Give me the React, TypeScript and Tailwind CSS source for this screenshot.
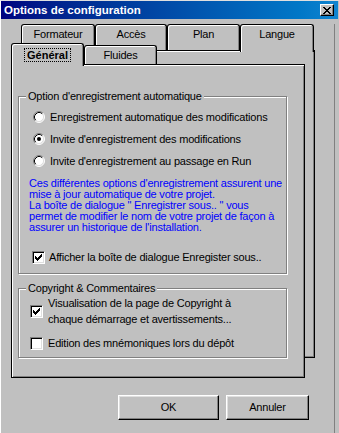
import React from "react";

const CHECK: [number, number][] = [
  [6, 0],
  [5, 1], [6, 1],
  [0, 2], [4, 2], [5, 2], [6, 2],
  [0, 3], [1, 3], [3, 3], [4, 3], [5, 3],
  [0, 4], [1, 4], [2, 4], [3, 4], [4, 4],
  [1, 5], [2, 5], [3, 5],
  [2, 6],
];

const CLOSE_X: [number, number][] = [];
[
  "XX....XX",
  ".XX..XX.",
  "..XXXX..",
  "...XX...",
  "..XXXX..",
  ".XX..XX.",
  "XX....XX",
].forEach((row, y) =>
  row.split("").forEach((c, x) => {
    if (c === "X") CLOSE_X.push([x, y]);
  })
);

function Radio({ checked }: { checked?: boolean }) {
  return (
    <svg width="12" height="12" viewBox="0 0 12 12" className="shrink-0">
      <circle cx="6" cy="6" r="5" fill="#fff" />
      <path d="M2.11 9.89 A5.5 5.5 0 0 1 9.89 2.11" stroke="#808080" fill="none" />
      <path d="M9.89 2.11 A5.5 5.5 0 0 1 2.11 9.89" stroke="#fff" fill="none" />
      <path d="M2.82 9.18 A4.5 4.5 0 0 1 9.18 2.82" stroke="#000" fill="none" />
      <path d="M9.18 2.82 A4.5 4.5 0 0 1 2.82 9.18" stroke="#dfdfdf" fill="none" />
      {checked && <circle cx="6" cy="6" r="2" fill="#000" />}
    </svg>
  );
}

function Checkbox({ checked }: { checked?: boolean }) {
  return (
    <div className="w-[13px] h-[13px] shrink-0 bg-white border border-t-[#808080] border-l-[#808080] border-b-white border-r-white shadow-[inset_1px_1px_0_#000,inset_-1px_-1px_0_#dfdfdf]">
      {checked && (
        <svg width="7" height="7" viewBox="0 0 7 7" className="ml-[2px] mt-[2px]" shapeRendering="crispEdges">
          {CHECK.map(([x, y]) => (
            <rect key={`${x}-${y}`} x={x} y={y} width="1" height="1" fill="#000" />
          ))}
        </svg>
      )}
    </div>
  );
}

function BackTab({ label, w }: { label: string; w: string }) {
  return (
    <div
      className={`${w} h-[26px] border border-b-0 border-black rounded-t-[3px] shadow-[inset_1px_1px_0_#fff,inset_-1px_0_0_#808080] bg-[#c0c0c0] text-center pt-[3px]`}
    >
      {label}
    </div>
  );
}

export default function App() {
  return (
    <div className="w-[339px] h-[433px] overflow-hidden bg-[#c0c0c0] font-[family-name:'Liberation_Sans',Arial,sans-serif] text-[11px] leading-[13px] text-black border-l border-t border-l-white border-t-[#dfdfdf]">
      {/* Title bar */}
      <div className="h-[18px] w-[337px] flex items-center justify-between pl-[3px] pr-[4px] bg-gradient-to-r from-[#000080] to-[#1084d0]">
        <span className="text-white font-bold text-[11.5px] whitespace-nowrap">Options de configuration</span>
        <div className="w-[14px] h-[12px] flex items-center justify-center bg-[#c0c0c0] border border-t-white border-l-white border-r-black border-b-black shadow-[inset_-1px_-1px_0_#808080]">
          <svg width="8" height="7" viewBox="0 0 8 7" shapeRendering="crispEdges">
            {CLOSE_X.map(([x, y]) => (
              <rect key={`${x}-${y}`} x={x} y={y} width="1" height="1" fill="#000" />
            ))}
          </svg>
        </div>
      </div>

      {/* Body */}
      <div className="w-[334px] h-[412px] border-r border-b border-[#808080] tracking-[-0.2px]">
        {/* Back tab row */}
        <div className="mt-[5px] ml-[20px] flex items-start">
          <BackTab label="Formateur" w="w-[74px]" />
          <BackTab label="Accès" w="w-[72px]" />
          <BackTab label="Plan" w="w-[73px]" />
          <div className="relative z-10 w-[74px] h-[28px] -mb-[2px] border border-b-0 border-black rounded-t-[3px] shadow-[inset_1px_1px_0_#fff,inset_-1px_0_0_#808080] bg-[#c0c0c0] text-center pt-[3px]">
            Langue
          </div>
        </div>

        {/* Back panel */}
        <div className="ml-[20px] w-[294px] h-[308px] border border-black shadow-[inset_1px_1px_0_#fff,inset_-1px_-1px_0_#808080] bg-[#c0c0c0]">
          <div className="-ml-[11px] -mt-[8px]">
            {/* Front tab row */}
            <div className="flex items-end h-[21px]">
              <div className="relative z-10 w-[73px] h-[23px] -mb-[2px] border border-b-0 border-black rounded-t-[3px] shadow-[inset_1px_1px_0_#fff,inset_-1px_0_0_#808080] bg-[#c0c0c0] flex justify-center pt-[4px]">
                <div className="h-[14px] border border-dotted border-black px-[2px] leading-[12px] font-bold tracking-normal">
                  Général
                </div>
              </div>
              <div className="w-[73px] h-[19px] border border-b-0 border-black rounded-t-[3px] shadow-[inset_1px_1px_0_#fff,inset_-1px_0_0_#808080] bg-[#c0c0c0] text-center pt-[3px]">
                Fluides
              </div>
            </div>

            {/* Front panel */}
            <div className="w-[294px] h-[314px] border border-black shadow-[inset_1px_1px_0_#fff,inset_-1px_-1px_0_#808080] bg-[#c0c0c0]">
              <fieldset className="ml-[6px] mt-[25px] w-[269px] border border-[#808080] shadow-[inset_1px_1px_0_#fff,1px_1px_0_#fff] pb-[5px]">
                <legend className="ml-[7px] px-[2px] leading-[13px] bg-[#c0c0c0]">
                  Option d'enregistrement automatique
                </legend>
                <div className="mt-[3px]">
                  <div className="h-[22px] flex items-center pl-[14px] gap-[5px]">
                    <Radio />
                    <span className="whitespace-nowrap">Enregistrement automatique des modifications</span>
                  </div>
                  <div className="h-[22px] flex items-center pl-[14px] gap-[5px]">
                    <Radio checked />
                    <span className="whitespace-nowrap">Invite d'enregistrement des modifications</span>
                  </div>
                  <div className="h-[22px] flex items-center pl-[14px] gap-[5px]">
                    <Radio />
                    <span className="whitespace-nowrap">Invite d'enregistrement au passage en Run</span>
                  </div>
                </div>
                <div className="mt-[6px] pl-[10px] text-[#0000ff] leading-[11px] whitespace-nowrap">
                  <div>Ces différentes options d'enregistrement assurent une</div>
                  <div>mise à jour automatique de votre projet.</div>
                  <div>La boîte de dialogue " Enregistrer sous.. " vous</div>
                  <div>permet de modifier le nom de votre projet de façon à</div>
                  <div>assurer un historique de l'installation.</div>
                </div>
                <div className="mt-[13px] h-[22px] flex items-center pl-[13px] gap-[4px]">
                  <Checkbox checked />
                  <span className="whitespace-nowrap">Afficher la boîte de dialogue Enregister sous..</span>
                </div>
              </fieldset>

              <fieldset className="ml-[6px] mt-[8px] w-[269px] border border-[#808080] shadow-[inset_1px_1px_0_#fff,1px_1px_0_#fff] pb-[6px]">
                <legend className="ml-[7px] px-[2px] leading-[13px] bg-[#c0c0c0]">
                  Copyright &amp; Commentaires
                </legend>
                <div className="flex items-center pl-[11px] gap-[5px] leading-[16px]">
                  <Checkbox checked />
                  <div className="whitespace-nowrap">
                    <div>Visualisation de la page de Copyright à</div>
                    <div>chaque démarrage et avertissements...</div>
                  </div>
                </div>
                <div className="mt-[8px] flex items-center pl-[11px] gap-[5px] leading-[16px]">
                  <Checkbox />
                  <span className="whitespace-nowrap">Edition des mnémoniques lors du dépôt</span>
                </div>
              </fieldset>
            </div>
          </div>
        </div>

        {/* Buttons */}
        <div className="mt-[37px] ml-[117px] flex gap-[7px]">
          <div className="w-[101px] h-[25px] flex items-center justify-center bg-[#c0c0c0] border border-t-white border-l-white border-r-black border-b-black shadow-[inset_-1px_-1px_0_#808080,inset_1px_1px_0_#dfdfdf]">
            OK
          </div>
          <div className="w-[83px] h-[25px] flex items-center justify-center bg-[#c0c0c0] border border-t-white border-l-white border-r-black border-b-black shadow-[inset_-1px_-1px_0_#808080,inset_1px_1px_0_#dfdfdf]">
            Annuler
          </div>
        </div>
      </div>
    </div>
  );
}
